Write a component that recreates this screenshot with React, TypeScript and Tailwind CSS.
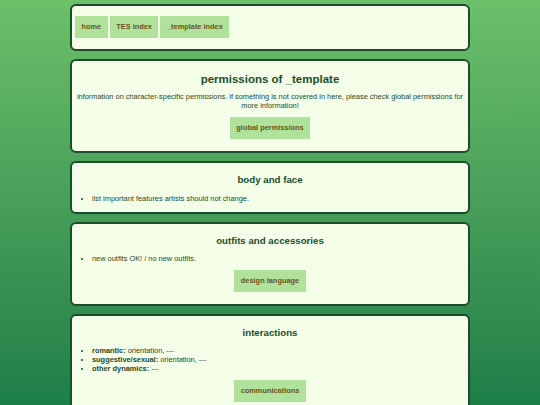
import React from "react";

const btn =
  "h-[22px] px-[6.5px] bg-[#b0e29c] text-[#6b5418] font-bold text-[7.4px] flex items-center whitespace-nowrap";

function Card({ children, className = "" }: { children: React.ReactNode; className?: string }) {
  return (
    <div
      className={
        "w-[400px] shrink-0 border-2 border-[#1b4d2c] rounded-[6px] bg-[#f3fde8] px-[4px] " + className
      }
    >
      {children}
    </div>
  );
}

function H2({ children }: { children: React.ReactNode }) {
  return (
    <h2 className="text-center font-bold text-[9.7px] leading-[14px] text-[#1b4d2c]">{children}</h2>
  );
}

export default function App() {
  return (
    <div
      className="h-screen overflow-hidden bg-gradient-to-b from-[#6cc06a] to-[#1d7e48] pt-[4px] flex flex-col items-center gap-[8px] text-[#1f4a2c]"
      style={{ fontFamily: '"Liberation Sans", Arial, sans-serif' }}
    >
      <Card className="pt-[10px] pb-[11px] !pl-[3px]">
        <div className="flex gap-[2px]">
          <div className={btn}>home</div>
          <div className={btn}>TES index</div>
          <div className={btn}>_template index</div>
        </div>
      </Card>

      <Card className="pt-[10.5px] pb-[12px]">
        <h1 className="text-center font-bold text-[11.5px] leading-[14px] text-[#1b4d2c]">
          permissions of _template
        </h1>
        <p className="mt-[6px] text-center text-[7.4px] leading-[9px]">
          information on character-specific permissions. if something is not covered in here, please check
          global permissions for more information!
        </p>
        <div className="mt-[7px] flex justify-center">
          <div className={btn}>global permissions</div>
        </div>
      </Card>

      <Card className="pt-[10.5px] pb-[9px]">
        <H2>body and face</H2>
        <ul className="mt-[6.5px] list-disc pl-[16px] text-[7.4px] leading-[9px]">
          <li>list important features artists should not change.</li>
        </ul>
      </Card>

      <Card className="pt-[10.5px] pb-[11.5px]">
        <H2>outfits and accessories</H2>
        <ul className="mt-[6px] list-disc pl-[16px] text-[7.4px] leading-[9px]">
          <li>new outfits OK! / no new outfits.</li>
        </ul>
        <div className="mt-[7px] flex justify-center">
          <div className={btn}>design language</div>
        </div>
      </Card>

      <Card className="pt-[10px] pb-[11px]">
        <H2>interactions</H2>
        <ul className="mt-[6.5px] list-disc pl-[16px] text-[7.4px] leading-[9px]">
          <li>
            <b>romantic:</b> orientation, ---
          </li>
          <li>
            <b>suggestive/sexual:</b> orientation, ---
          </li>
          <li>
            <b>other dynamics:</b> ---
          </li>
        </ul>
        <div className="mt-[7px] flex justify-center">
          <div className={btn}>communications</div>
        </div>
      </Card>
    </div>
  );
}
